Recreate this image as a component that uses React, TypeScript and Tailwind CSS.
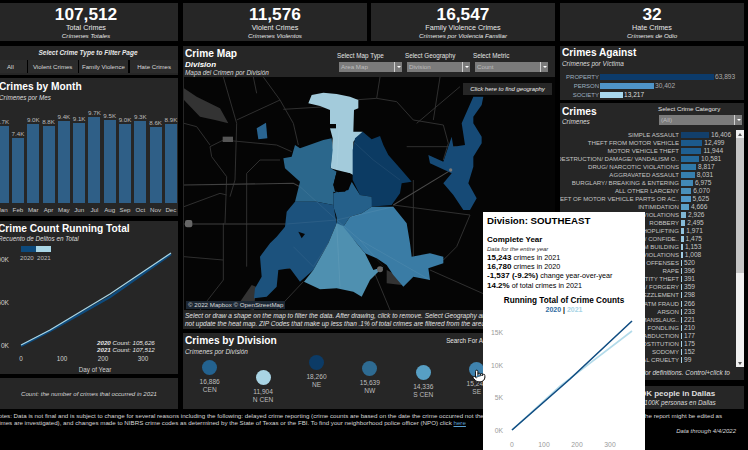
import { Pointer } from 'lucide-react';

const months = [
  { m: 'Jan', v: '8.7K', h: 77 },
  { m: 'Feb', v: '7.4K', h: 65 },
  { m: 'Mar', v: '9.0K', h: 79 },
  { m: 'Apr', v: '8.8K', h: 77 },
  { m: 'May', v: '9.4K', h: 82 },
  { m: 'Jun', v: '9.1K', h: 80 },
  { m: 'Jul', v: '9.7K', h: 86 },
  { m: 'Aug', v: '9.5K', h: 83 },
  { m: 'Sep', v: '9.0K', h: 79 },
  { m: 'Oct', v: '9.3K', h: 82 },
  { m: 'Nov', v: '8.6K', h: 76 },
  { m: 'Dec', v: '8.9K', h: 79 },
];

const crimes = [
  ['SIMPLE ASSAULT', 16406, '#123f6b'],
  ['THEFT FROM MOTOR VEHICLE', 12499, '#1c5a8c'],
  ['MOTOR VEHICLE THEFT', 11944, '#1f5f92'],
  ['DESTRUCTION/ DAMAGE/ VANDALISM O..', 10581, '#256a9c'],
  ['DRUG/ NARCOTIC VIOLATIONS', 8817, '#2f78a8'],
  ['AGGRAVATED ASSAULT', 8031, '#367fae'],
  ['BURGLARY/ BREAKING & ENTERING', 6975, '#4289b6'],
  ['ALL OTHER LARCENY', 6070, '#4a90bb'],
  ['THEFT OF MOTOR VEHICLE PARTS OR AC..', 5625, '#5199c8'],
  ['INTIMIDATION', 4666, '#5a9fc6'],
  ['WEAPON LAW VIOLATIONS', 2926, '#7fb6d4'],
  ['ROBBERY', 2495, '#86bbd8'],
  ['SHOPLIFTING', 1971, '#90c2dc'],
  ['FALSE PRETENSES/ SWINDLE/ CONFIDE..', 1475, '#98c8e0'],
  ['THEFT FROM BUILDING', 1153, '#9ecce2'],
  ['PORNOGRAPHY VIOLATIONS', 1008, '#a2cee4'],
  ['COUNTERFEIT MONEY OFFENSES', 520, '#a8d2e6'],
  ['RAPE', 396, '#a8d2e6'],
  ['IDENTITY THEFT', 391, '#a8d2e6'],
  ['COUNTERFEITING / FORGERY', 359, '#a8d2e6'],
  ['EMBEZZLEMENT', 298, '#a8d2e6'],
  ['CREDIT CARD/ ATM FRAUD', 266, '#a8d2e6'],
  ['ARSON', 233, '#a8d2e6'],
  ['NEGLIGENT MANSLAUG..', 221, '#a8d2e6'],
  ['FONDLING', 210, '#a8d2e6'],
  ['KIDNAPPING/ ABDUCTION', 177, '#a8d2e6'],
  ['PROSTITUTION', 175, '#a8d2e6'],
  ['SODOMY', 152, '#a8d2e6'],
  ['ANIMAL CRUELTY', 99, '#a8d2e6'],
] as const;

const divisions = [
  { v: '16,886', n: 'CEN', c: '#23628f', top: 'mt-[11px]' },
  { v: '11,904', n: 'N CEN', c: '#a9d4e4', top: 'mt-[21px]' },
  { v: '18,260', n: 'NE', c: '#0c3b66', top: 'mt-[6px]' },
  { v: '15,639', n: 'NW', c: '#2e6b92', top: 'mt-[12px]' },
  { v: '14,336', n: 'S CEN', c: '#579fc4', top: 'mt-[16px]' },
  { v: '15,243', n: 'SE', c: '#3f82ad', top: 'mt-[13px]' },
];

const roads = [
  'M310 88 L440 80 L520 60 L590 55 L650 65 L700 120 L790 135 L805 190 L790 240',
  'M600 -9 L590 55',
  'M130 -9 L170 130 L165 300 L150 350',
  'M300 60 L170 120',
  'M250 -9 L300 60 L340 130 L355 195',
  'M90 200 L130 180 L290 195 L335 215',
  'M90 200 L95 230 L140 290 L135 430',
  'M200 430 L200 280 L240 240 L300 240',
  'M12 130 L50 140 L90 195',
  'M700 300 L700 530',
  'M640 375 L870 405',
  'M870 405 L830 500 L790 540',
  'M750 570 L930 650',
  'M680 200 L830 200',
  'M710 130 L840 20',
  'M580 570 L630 690',
  'M370 605 L290 690',
  'M12 380 L120 340 L140 345',
  'M300 560 L360 570',
  'M130 430 L130 600 L60 690',
  'M200 430 L200 560',
  'M12 530 L130 540',
  'M220 -9 L230 40',
  'M760 120 L780 -9',
];

function Panel({ className, children }: { className: string; children: React.ReactNode }) {
  return <div className={`bg-[#262626] ${className}`}>{children}</div>;
}

function Kpi({ value, label, sub, className }: { value: string; label: string; sub: string; className: string }) {
  return (
    <Panel className={`h-[38px] flex flex-col items-center text-[#e8e8e8] ${className}`}>
      <div className="text-[17.3px] font-bold leading-[19px] mt-[2px] text-white">{value}</div>
      <div className="text-[7.2px] leading-[8px]">{label}</div>
      <div className="text-[6.2px] leading-[7px] italic">{sub}</div>
    </Panel>
  );
}

function Select({ label, className }: { label: string; className: string }) {
  return (
    <div className={`h-[10px] bg-[#7b7b7b] flex items-center justify-between text-[6.2px] text-[#bdbdbd] pl-[2px] ${className}`}>
      <span>{label}</span>
      <div className="w-[8px] h-full border-l border-[#d0d0d0] flex items-center justify-center">
        <div className="w-0 h-0 border-x-[2px] border-x-transparent border-t-[2px] border-t-white" />
      </div>
    </div>
  );
}

function CrimeMap() {
  return (
    <svg viewBox="12 -9 1113 699" className="block w-[371px] h-[233px]">
      <rect x="12" y="-9" width="1113" height="699" fill="#050505" />
      <path d="M12 25 L50 50 L120 85 L145 130 L105 120 L60 110 L12 60 Z" fill="#333" />
      <path d="M170 680 L215 615 L228 620 L222 690 Z" fill="#333" />
      <path d="M620 570 L660 590 L665 615 L620 610 Z" fill="#333" />
      {roads.map((d) => (
        <path key={d} d={d} stroke="#333333" strokeWidth="2.8" fill="none" />
      ))}
      <path d="M12 315 L340 310 L360 320" stroke="#414141" strokeWidth="3.2" fill="none" />
      <path d="M12 432 L320 432" stroke="#414141" strokeWidth="3.2" fill="none" />
      <path d="M640 375 L810 272" stroke="#4a4a4a" strokeWidth="3.2" fill="none" />
      <path d="M230 145 L258 128 L262 175 L235 178 Z" fill="#2a6591" />
      <path d="M880 50 L910 50 L905 75 L880 110 L880 130 L905 170 L905 190 L880 230 L880 260 L865 310 L890 355 L870 390 L850 390 L820 345 L790 310 L815 280 L750 250 L745 225 L790 245 L815 170 L820 200 L855 195 L845 130 Z" fill="#164a76" />
      <path d="M385 70 L395 45 L430 38 L470 42 L510 50 L535 60 L535 85 L522 90 L520 155 L548 155 L520 185 L520 285 L510 280 L470 270 L452 265 L458 175 L450 145 L450 90 L420 78 Z" fill="#a3cbdb" />
      <path d="M548 155 L525 175 L518 210 L518 300 L540 345 L575 350 L570 380 L635 375 L660 340 L665 310 L695 305 L660 265 L625 225 L610 195 L600 168 L575 178 Z" fill="#0c3b63" />
      <path d="M455 175 L430 180 L360 205 L345 195 L335 230 L310 235 L315 265 L360 305 L345 365 L410 365 L460 375 L460 335 L475 340 L460 315 L470 275 L452 265 L458 210 Z" fill="#2b678c" />
      <path d="M515 305 L505 330 L460 340 L460 380 L470 410 L490 440 L510 410 L545 400 L575 380 L575 350 L540 345 Z" fill="#25608a" />
      <path d="M345 365 L320 395 L315 440 L290 470 L270 490 L240 530 L245 590 L225 625 L222 655 L260 650 L290 620 L295 570 L330 565 L360 605 L400 570 L445 490 L470 430 L460 375 L410 365 Z" fill="#1c527d" />
      <path d="M470 405 L495 440 L470 435 Z" fill="#25608a" />
      <path d="M470 430 L445 490 L400 570 L372 605 L420 628 L470 625 L520 635 L545 650 L570 600 L610 560 L580 570 L555 520 L530 490 L495 440 Z" fill="#4f90b0" />
      <path d="M510 410 L490 440 L530 490 L555 520 L590 535 L620 555 L640 585 L670 620 L700 590 L750 600 L745 565 L790 550 L790 530 L750 520 L695 530 L690 490 L680 430 L640 380 L575 380 L545 400 Z" fill="#3a7ca5" />
      <path d="M470 275 L510 280 L515 305 L495 335 L465 335 L460 315 Z" fill="#050505" />
      <path d="M355 455 L375 462 L365 475 Z" fill="#050505" />
      <path d="M450 132 L468 132 L468 145 L450 145 Z" fill="#050505" />
      <g stroke="#ffffff" strokeOpacity="0.08" strokeWidth="2.5" fill="none">
        <path d="M360 320 L470 420 L540 480 L610 560" />
        <path d="M320 432 L470 420 L640 380" />
        <path d="M520 185 L580 240 L660 300" />
        <path d="M478 140 L470 270" />
        <path d="M470 430 L480 620" />
        <path d="M540 480 L750 600" />
        <path d="M340 500 L400 560 L445 490" />
      </g>
      <rect x="128" y="170" width="31" height="16" fill="#555" />
      <rect x="15" y="420" width="22" height="22" rx="6" fill="#666" />
      <circle cx="600" cy="568" r="9" fill="#666" />
      <circle cx="812" cy="270" r="5" fill="#777" />
    </svg>
  );
}

function RunningChart() {
  return (
    <svg viewBox="-6 243 184 131" className="block w-[184px] h-[131px]" fontFamily="'Liberation Sans', Arial, sans-serif">
      <rect x="21" y="246" width="15" height="6" fill="#0d4a7c" />
      <rect x="36" y="246" width="15" height="6" fill="#a9d6e6" />
      <text x="20" y="260" fontSize="6.2" fill="#bbb">2020</text>
      <text x="37" y="260" fontSize="6.2" fill="#bbb">2021</text>
      <g fontSize="6.6" fill="#cfcfcf" textAnchor="end">
        <text x="9" y="262">100K</text>
        <text x="9" y="305">50K</text>
        <text x="9" y="348">0K</text>
      </g>
      <path d="M21 346 L50 331 L110 297 L171 254" stroke="#0d4a7c" strokeWidth="2.4" fill="none" />
      <path d="M21 345 L50 330 L110 294 L171 253" stroke="#a9d6e6" strokeWidth="1.2" fill="none" />
      <g fontSize="6.2" fill="#e6e6e6" fontStyle="italic">
        <text x="97" y="344.5"><tspan fontWeight="bold">2020</tspan> Count: 105,626</text>
        <text x="97" y="351.5"><tspan fontWeight="bold">2021</tspan> Count: 107,512</text>
      </g>
      <g fontSize="6.3" fill="#cfcfcf" textAnchor="middle">
        <text x="21" y="360.5">0</text>
        <text x="62" y="360.5">100</text>
        <text x="103" y="360.5">200</text>
        <text x="143" y="360.5">300</text>
        <text x="95" y="372">Day of Year</text>
      </g>
    </svg>
  );
}

function TooltipChart() {
  return (
    <svg viewBox="483 312 162 138" className="block w-[162px] h-[138px]" fontFamily="'Liberation Sans', Arial, sans-serif">
      <g fontSize="6.8" fill="#9a9a9a" textAnchor="end">
        <text x="503" y="334.5">15K</text>
        <text x="503" y="367.5">10K</text>
        <text x="503" y="399.5">5K</text>
        <text x="503" y="432.5">0K</text>
      </g>
      <path d="M512 430 L560 386 L632 331" stroke="#b3dbea" strokeWidth="1.6" fill="none" />
      <path d="M512 430 L570 379 L632 321" stroke="#0f4c81" strokeWidth="1.6" fill="none" />
      <g fontSize="6.8" fill="#9a9a9a" textAnchor="middle">
        <text x="512" y="446.5">0</text>
        <text x="544" y="446.5">100</text>
        <text x="577" y="446.5">200</text>
        <text x="610" y="446.5">300</text>
      </g>
    </svg>
  );
}

export default function App() {
  return (
    <div className="relative w-[748px] h-[450px] bg-black overflow-hidden font-['Liberation_Sans',Arial,sans-serif] text-white">
      <div className="flex -ml-[6px] pt-[3px]">
        <Kpi value="107,512" label="Total Crimes" sub="Crímenes Totales" className="w-[184px] mr-[5px]" />
        <Kpi value="11,576" label="Violent Crimes" sub="Crímenes Violentos" className="w-[184px] mr-[4px]" />
        <Kpi value="16,547" label="Family Violence Crimes" sub="Crímenes por Violencia Familiar" className="w-[184px] mr-[5px]" />
        <Kpi value="32" label="Hate Crimes" sub="Crímenes de Odio" className="w-[184px]" />
      </div>

      <div className="flex -ml-[6px] mt-[5px] gap-[5px]">
        {/* left column */}
        <div className="w-[184px] flex flex-col">
          <Panel className="h-[29px] flex flex-col">
            <div className="text-[6.5px] font-bold italic text-center leading-[14px] text-[#e8e8e8] pl-[4px]">Select Crime Type to Filter Page</div>
            <div className="flex gap-[1px] text-[6.1px] text-[#d8d8d8] h-[13px] bg-black">
              <div className="w-[33px] bg-[#2b2b2b] flex items-center justify-center">All</div>
              <div className="w-[50px] bg-[#2b2b2b] flex items-center justify-center">Violent Crimes</div>
              <div className="w-[50px] bg-[#2b2b2b] flex items-center justify-center">Family Violence</div>
              <div className="w-[48px] ml-[1px] bg-[#2b2b2b] flex items-center justify-center">Hate Crimes</div>
            </div>
          </Panel>
          <Panel className="h-[138px] mt-[3px] pl-[1px]">
            <div className="text-[10.2px] font-bold leading-[13px] pt-[1px] mt-[1px] pl-[4px]">Crimes by Month</div>
            <div className="text-[6.3px] italic leading-[9px] text-[#ddd] pl-[4px]">Crímenes por Mes</div>
            <div className="flex items-end h-[100px] mt-[1px]">
              {months.map((b) => (
                <div key={b.m} className="w-[15.3px] shrink-0 flex flex-col items-center">
                  <div className="text-[6.2px] leading-[9px] text-[#bbb]">{b.v}</div>
                  <div className="w-[12px] bg-[#2f5f87]" style={{ height: b.h }} />
                </div>
              ))}
            </div>
            <div className="flex mt-[2px]">
              {months.map((b) => (
                <div key={b.m} className="w-[15.3px] shrink-0 text-center text-[6.2px] leading-[10px] text-[#ccc]">{b.m}</div>
              ))}
            </div>
          </Panel>
          <Panel className="h-[153px] mt-[5px]">
            <div className="text-[10.2px] font-bold leading-[12px] pt-[2px] pl-[4px] whitespace-nowrap">Crime Count Running Total</div>
            <div className="text-[6.3px] italic leading-[8px] text-[#ddd] pl-[4px]">Recuento de Delitos en Total</div>
            <RunningChart />
          </Panel>
          <Panel className="h-[31px] mt-[4px] flex items-center justify-center pl-[6px]">
            <div className="text-[6.1px] italic text-[#d8d8d8]">Count: the number of crimes that occurred in 2021</div>
          </Panel>
        </div>

        {/* center column */}
        <div className="w-[372px] flex flex-col gap-[4px]">
          <Panel className="h-[283px]">
            <div className="h-[31px] flex">
              <div className="w-[156px] pl-[2px]">
                <div className="text-[10.2px] font-bold leading-[13px] mt-[1px]">Crime Map</div>
                <div className="text-[8px] font-bold italic leading-[9px]">Division</div>
                <div className="text-[6.4px] italic leading-[8px] text-[#ddd]">Mapa del Crimen por División</div>
              </div>
              <div className="flex gap-[5px] pt-[4px]">
                <div className="w-[63px]">
                  <div className="text-[6.3px] leading-[12px] whitespace-nowrap -ml-[2px] text-[#e4e4e4]">Select Map Type</div>
                  <Select label="Area Map" className="w-[63px]" />
                </div>
                <div className="w-[63px]">
                  <div className="text-[6.3px] leading-[12px] whitespace-nowrap -ml-[2px] text-[#e4e4e4]">Select Geography</div>
                  <Select label="Division" className="w-[63px]" />
                </div>
                <div className="w-[73px]">
                  <div className="text-[6.3px] leading-[12px] whitespace-nowrap -ml-[2px] text-[#e4e4e4]">Select Metric</div>
                  <Select label="Count" className="w-[73px]" />
                </div>
              </div>
            </div>
            <div className="relative ml-[1px]">
              <CrimeMap />
              <div className="absolute left-[279px] top-[6px] w-[89px] h-[12px] bg-[#262626] flex items-center justify-center text-[6px] italic text-[#eee] whitespace-nowrap">Click here to find geography</div>
              <div className="absolute left-[2px] bottom-[1px] h-[8px] px-[2px] bg-[#1c2733] text-[6.2px] leading-[8px] text-[#d8d8d8] whitespace-nowrap">© 2022 Mapbox © OpenStreetMap</div>
            </div>
            <div className="text-[6.5px] italic leading-[7.5px] text-[#e2e2e2] pl-[2px] pt-[2px] whitespace-nowrap">
              <div>Select or draw a shape on the map to filter the data. After drawing, click to remove. Select Geography and Select Metric do</div>
              <div>not update the heat map. ZIP Codes that make up less than .1% of total crimes are filtered from the area map and tables.</div>
            </div>
          </Panel>
          <Panel className="h-[76px] relative">
            <div className="flex justify-between">
              <div className="pl-[2px]">
                <div className="text-[10.2px] font-bold leading-[13px] mt-[1px]">Crimes by Division</div>
                <div className="text-[6.4px] italic leading-[9px] text-[#ddd]">Crímenes por División</div>
              </div>
              <div className="text-[6.3px] text-[#e4e4e4] pt-[3px] pr-[63px] whitespace-nowrap">Search For Area</div>
            </div>
            <div className="absolute left-0 top-0 flex">
              {divisions.map((d) => (
                <div key={d.n} className={`w-[53.4px] flex flex-col items-center ${d.top} pt-[16px]`}>
                  <div className="w-[15px] h-[15px] rounded-full" style={{ background: d.c }} />
                  <div className="text-[6.6px] leading-[9px] text-[#bdbdbd] mt-[2px]">{d.v}</div>
                  <div className="text-[6.6px] leading-[8px] text-[#bdbdbd]">{d.n}</div>
                </div>
              ))}
            </div>
          </Panel>
        </div>

        {/* right column */}
        <div className="w-[184px] flex flex-col">
          <Panel className="h-[54px] pl-[2px]">
            <div className="text-[10.2px] font-bold leading-[13px]">Crimes Against</div>
            <div className="text-[6.4px] italic leading-[9px] text-[#ddd]">Crímenes por Víctima</div>
            <div className="mt-[6px] flex flex-col gap-[3px] text-[6px] text-[#9fb0c0]">
              <div className="flex items-center h-[6px]">
                <div className="w-[37px] text-right mr-[1px]">PROPERTY</div>
                <div className="w-[114px] h-full bg-[#0c3b6b]" />
                <div className="ml-[1px] text-[6.6px] text-[#aaa]">63,893</div>
              </div>
              <div className="flex items-center h-[6px]">
                <div className="w-[37px] text-right mr-[1px]">PERSON</div>
                <div className="w-[54px] h-full bg-[#4f94c8]" />
                <div className="ml-[1px] text-[6.6px] text-[#aaa]">30,402</div>
              </div>
              <div className="flex items-center h-[6px]">
                <div className="w-[37px] text-right mr-[1px]">SOCIETY</div>
                <div className="w-[23px] h-full bg-[#a8d8ee]" />
                <div className="ml-[1px] text-[6.6px] text-[#ddd]">13,217</div>
              </div>
            </div>
          </Panel>
          <Panel className="h-[277px] mt-[3px]">
            <div className="h-[27px] flex pl-[2px]">
              <div className="w-[97px]">
                <div className="text-[10.2px] font-bold leading-[13px] mt-[2px]">Crimes</div>
                <div className="text-[6.4px] italic leading-[8px] text-[#ddd]">Crímenes</div>
              </div>
              <div className="w-[83px]">
                <div className="text-[6.2px] leading-[12px] text-[#e4e4e4] whitespace-nowrap -ml-[1px]">Select Crime Category</div>
                <Select label="(All)" className="w-[83px]" />
              </div>
            </div>
            <div className="flex h-[237px]">
              <div className="w-[175px] overflow-hidden pt-[0.5px]">
                {crimes.map(([name, value, color]) => (
                  <div key={name} className="h-[8.06px] flex items-center leading-[8px] text-[#c4c4c4]">
                    <div className="w-[119px] shrink-0 text-[6.1px] text-right whitespace-nowrap flex justify-end overflow-hidden">{name}</div>
                    <div className="ml-[2px] h-[6px]" style={{ width: Math.max(1, (value / 16406) * 28), background: color }} />
                    <div className="ml-[2px] text-[6.6px]">{value.toLocaleString('en-US')}</div>
                  </div>
                ))}
              </div>
              <div className="w-[8px] ml-[1px] bg-[#f0f0f0] flex flex-col items-center text-[#555]">
                <div className="h-[8px] flex items-center justify-center">
                  <div className="w-0 h-0 border-x-[2px] border-x-transparent border-b-[3px] border-b-[#555]" />
                </div>
                <div className="w-full h-[135px] bg-[#c6c6c6]" />
                <div className="flex-1" />
                <div className="h-[8px] flex items-center justify-center">
                  <div className="w-0 h-0 border-x-[2px] border-x-transparent border-t-[3px] border-t-[#555]" />
                </div>
              </div>
            </div>
            <div className="text-[6.5px] italic leading-[10px] text-[#ddd] pr-[14px] mt-[1px] whitespace-nowrap overflow-hidden flex justify-end">Click on crimes for definitions. Control+click to</div>
          </Panel>
          <Panel className="h-[23px] mt-[6px] flex flex-col items-center justify-center">
            <div className="text-[8px] font-bold leading-[10px] text-[#ddd] whitespace-nowrap">Crimes per 100K people in Dallas</div>
            <div className="text-[6.4px] italic leading-[7px] text-[#ddd] whitespace-nowrap">Crímenes por cada 100K personas en Dallas</div>
          </Panel>
        </div>
      </div>

      <div className="-ml-[6px] w-[750px] mt-[3px] text-[6.2px] leading-[7.2px] text-[#d8d8d8]">
        <div className="whitespace-nowrap">Notes: Data is not final and is subject to change for several reasons including the following: delayed crime reporting (crime counts are based on the date the crime occurred not the date it was reported, so over time some of the portions of the report might be edited as</div>
        <div className="whitespace-nowrap">crimes are investigated), and changes made to NIBRS crime codes as determined by the State of Texas or the FBI. To find your neighborhood police officer (NPO) click <span className="underline text-[#5a9fd0]">here</span></div>
        <div className="text-right italic pr-[8px] mt-[1px] text-[6px] leading-[9px]">Data through 4/4/2022</div>
      </div>

      {/* tooltip */}
      <div className="absolute left-[483px] top-[212px] w-[162px] h-[238px] bg-white text-black">
        <div className="text-[9.7px] font-bold leading-[12px] pl-[4px] pt-[3px]">Division: SOUTHEAST</div>
        <div className="text-[8px] font-bold leading-[10px] pl-[4px] mt-[8px]">Complete Year</div>
        <div className="text-[6px] italic leading-[8px] pl-[4px] text-[#333]">Data for the entire year</div>
        <div className="text-[7.2px] leading-[9.2px] pl-[4px]">
          <div><span className="font-bold text-[8px]">15,243</span> crimes in 2021</div>
          <div><span className="font-bold text-[8px]">16,780</span> crimes in 2020</div>
          <div><span className="font-bold text-[8px]">-1,537 (-9.2%)</span> change year-over-year</div>
          <div><span className="font-bold text-[8px]">14.2%</span> of total crimes in 2021</div>
        </div>
        <div className="text-[8.2px] font-bold leading-[10px] text-center mt-[6px]">Running Total of Crime Counts</div>
        <div className="text-[7px] font-bold leading-[8px] text-center">
          <span className="text-[#2f6c9f]">2020</span> | <span className="text-[#a6d3e5]">2021</span>
        </div>
        <div className="absolute left-0 top-[100px]">
          <TooltipChart />
        </div>
      </div>

      <Pointer className="absolute left-[472px] top-[369px] w-[14px] h-[14px] text-black fill-white" strokeWidth={1.5} />
    </div>
  );
}
